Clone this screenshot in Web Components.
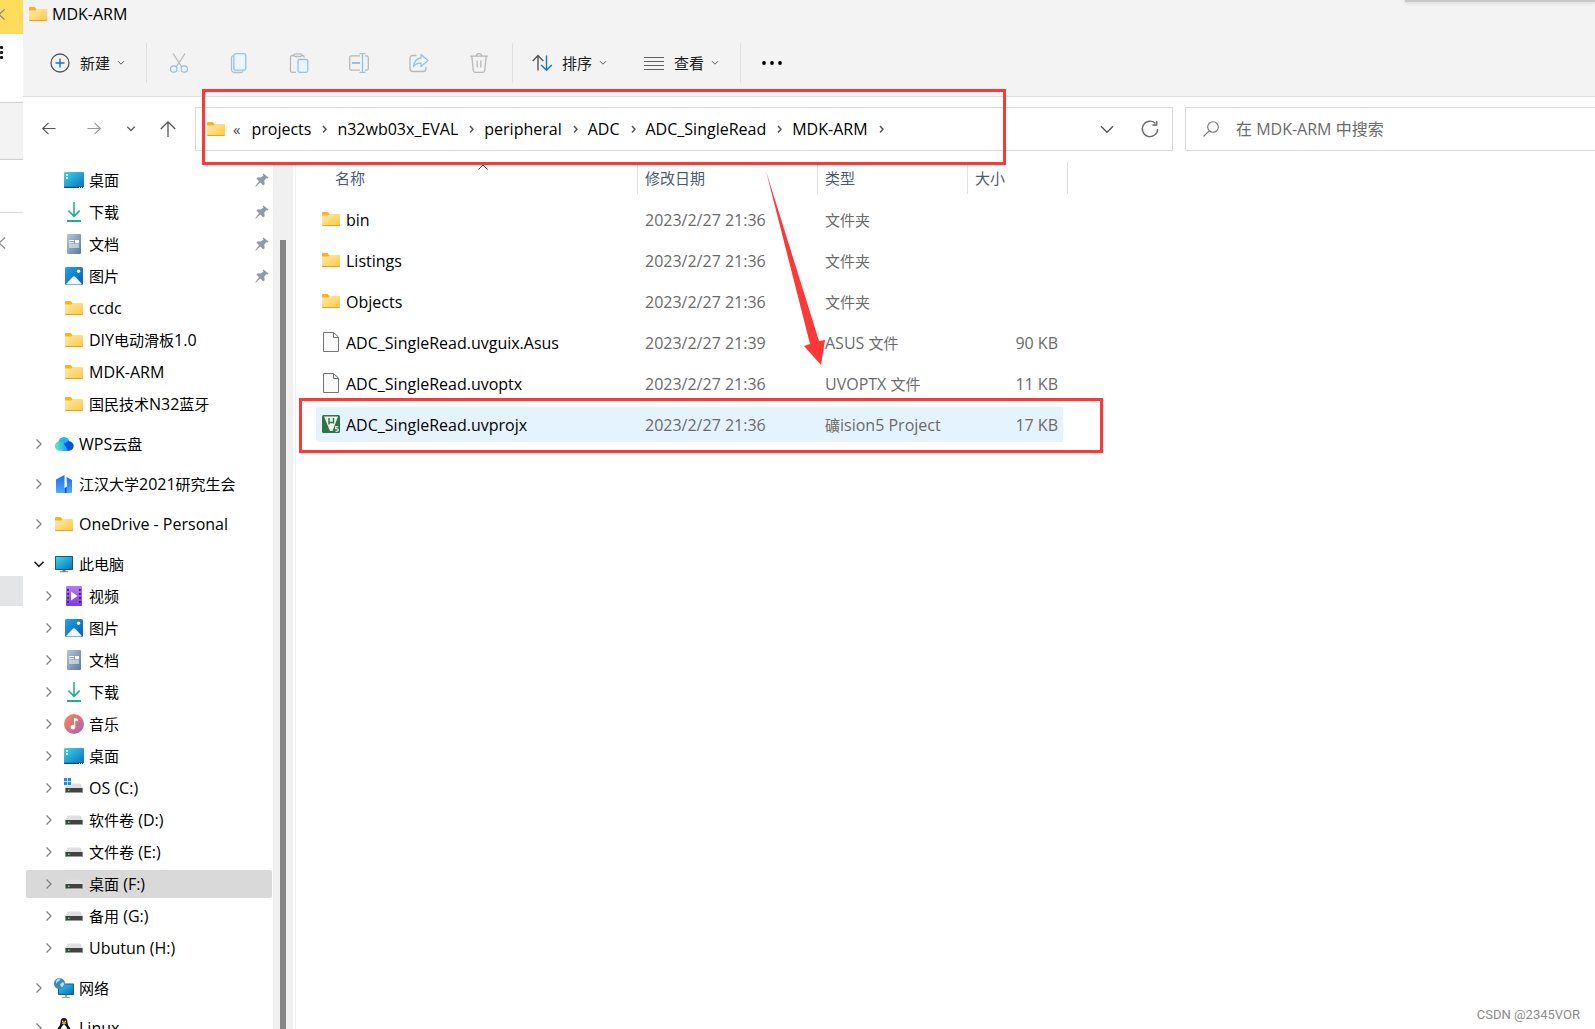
<!DOCTYPE html>
<html lang="zh-CN">
<head>
<meta charset="utf-8">
<title>MDK-ARM</title>
<style>
  html, body { margin: 0; height: 100%; }
  body {
    overflow: hidden; background: #fff; color: #000;
    font-family: "Open Sans", "Noto Sans CJK SC", sans-serif;
    font-size: 15px; line-height: 20px;
  }
</style>
</head>
<body>
<desktop-view></desktop-view>
<script>
const FOLDER = `<svg viewBox="0 0 20 20"><defs><linearGradient id="f" x1="0" y1="0" x2="1" y2="1"><stop offset="0" stop-color="#ffeab0"/><stop offset="1" stop-color="#ffc93f"/></linearGradient></defs><path d="M1 4q0-1 1-1h4.500l2 2H12v4H1z" fill="#f9b517"/><path d="M1 6.500h6.500l1.200-1.500H18q1 0 1 1V16q0 1-1 1H2q-1 0-1-1z" fill="url(#f)"/><path d="M1 16h18q0 1-1 1H2q-1 0-1-1z" fill="#e5a41c"/></svg>`;
const DRIVE = `<path d="M4.500 5.500h11q.8 0 1.300.6L19 10H1l2.200-3.900q.5-.6 1.300-.6z" fill="#dedfe1"/><path d="M1 10h18v5H1z" fill="#9b9b9b"/><path d="M1.800 10h16.400v4H1.800z" fill="#424242"/><path d="M4 11.500h1.500V13H4z" fill="#3cf04a"/>`;
const ICONS = {
  folder: FOLDER,
  desktop: `<svg viewBox="0 0 20 20"><defs><linearGradient id="g" x1="0" y1="0" x2="1" y2="1"><stop offset="0" stop-color="#36dbe8"/><stop offset="1" stop-color="#0d6cbc"/></linearGradient></defs><rect y="2" width="20" height="16" rx="1" fill="url(#g)"/><path d="M0 16.800h20V17q0 1-1 1H1q-1 0-1-1z" fill="#0d4379"/><path d="M2 4h2v2H2zM2 7h2v2H2zM15 17h1v1h-1zM17 17h1v1h-1zM19 17h1v1h-1z" fill="#fff"/></svg>`,
  download: `<svg viewBox="0 0 20 20"><defs><linearGradient id="g" x1="0" y1="0" x2="1" y2="1"><stop offset="0" stop-color="#32c878"/><stop offset="1" stop-color="#12a39b"/></linearGradient></defs><path d="M9.200 0h1.600v12.300l4.300-4.200 1.100 1.200-6.200 6.200-6.200-6.200 1.100-1.200 4.300 4.200z" fill="url(#g)"/><rect x="3" y="18" width="14" height="2" rx=".6" fill="#1db08c"/></svg>`,
  document: `<svg viewBox="0 0 20 20"><defs><linearGradient id="g" x1="0" y1="0" x2="1" y2="1"><stop offset="0" stop-color="#b7c6d7"/><stop offset="1" stop-color="#587ba0"/></linearGradient></defs><rect x="3" width="14" height="20" rx="1" fill="url(#g)"/><path d="M5 6h5v1H5zM5 8.300h5v1H5zM5 10.500h10v1H5zM5 12.600h10v1H5zM11 6h4v3.300h-4z" fill="#fff"/></svg>`,
  picture: `<svg viewBox="0 0 20 20"><defs><linearGradient id="g" x1="0" y1="0" x2="1" y2="1"><stop offset="0" stop-color="#1ea4ea"/><stop offset="1" stop-color="#0a5bb2"/></linearGradient></defs><rect x="1" y="1" width="18" height="18" rx="1.600" fill="url(#g)"/><path d="M2 18l6.800-7.200q1.200-1 2.400 0L18 18q-.4.400-1 .4H3q-.6 0-1-.4z" fill="#f2f8ff"/><circle cx="14.500" cy="5.300" r="1.700" fill="#fff"/></svg>`,
  cloud: `<svg viewBox="0 0 20 20"><defs><linearGradient id="g" x1="0" y1="0" x2="1" y2="0"><stop offset="0" stop-color="#62edc0"/><stop offset="1" stop-color="#18a0f5"/></linearGradient></defs><circle cx="10" cy="8.500" r="5.500" fill="#24b2fb"/><circle cx="15" cy="12" r="4.700" fill="#0756d8"/><path d="M10 8l5 8.700H9z" fill="#086be2"/><path d="M5.500 7.500q2.500 0 3.800 2l4 5.500q-1 1.700-3 1.700H5.300a4.600 4.600 0 0 1 .2-9.200z" fill="url(#g)"/></svg>`,
  building: `<svg viewBox="0 0 20 20"><defs><linearGradient id="g" x1="0" y1="0" x2="0" y2="1"><stop offset="0" stop-color="#176df2"/><stop offset="1" stop-color="#52abff"/></linearGradient></defs><path d="M2 5.500L10.500 1v18H3q-1 0-1-1z" fill="url(#g)"/><path d="M12.500 3l5.500 3v12q0 1-1 1h-5V13l1-.5z" fill="url(#g)"/><path d="M10.500 14l2-1v6h-2z" fill="#0c54cf"/></svg>`,
  computer: `<svg viewBox="0 0 20 20"><defs><linearGradient id="g" x1="0" y1="0" x2="1" y2="1"><stop offset="0" stop-color="#38dbe6"/><stop offset="1" stop-color="#0d6fc0"/></linearGradient></defs><rect x="1" y="2" width="18" height="14" rx=".7" fill="#135a85"/><rect x="2" y="3" width="16" height="12" fill="url(#g)"/><path d="M8.500 16h3v1.300H14v1H6v-1h2.500z" fill="#6b7c86"/></svg>`,
  video: `<svg viewBox="0 0 20 20"><defs><linearGradient id="g" x1="0" y1="0" x2="0" y2="1"><stop offset="0" stop-color="#b57bf3"/><stop offset="1" stop-color="#8338e0"/></linearGradient></defs><rect x="2" width="16" height="20" rx="1" fill="url(#g)"/><path d="M3.200 3h1.800v1.800H3.200zM3.200 7h1.800v1.800H3.200zM3.200 11h1.800v1.800H3.200zM3.200 15h1.800v1.800H3.200zM15 3h1.800v1.800H15zM15 7h1.800v1.800H15zM15 11h1.800v1.800H15zM15 15h1.800v1.800H15z" fill="#3a1a5e"/><path d="M7 5.500l6.500 4.500L7 14.500z" fill="#fff"/></svg>`,
  music: `<svg viewBox="0 0 20 20"><defs><linearGradient id="g" x1="0" y1="0" x2="1" y2="1"><stop offset=".1" stop-color="#f08a58"/><stop offset="1" stop-color="#a95cba"/></linearGradient></defs><circle cx="10" cy="10" r="10" fill="url(#g)"/><path d="M10 4q2.800.2 4 1.500v2Q12.500 6.600 11.300 6.600V13a2.300 2.300 0 1 1-1.300-2z" fill="#fff"/></svg>`,
  drive: `<svg viewBox="0 0 20 20">${DRIVE}</svg>`,
  osdrive: `<svg viewBox="0 0 20 20">${DRIVE}<path d="M-.5-.5h8v8h-8z" fill="#fff"/><path d="M0 0h3.200v3.200H0zM3.900 0H7v3.200H3.900zM0 3.900h3.200V7H0zM3.900 3.900H7V7H3.900z" fill="#1690e6"/></svg>`,
  network: `<svg viewBox="0 0 20 20"><defs><linearGradient id="g" x1="0" y1="0" x2="1" y2="1"><stop offset="0" stop-color="#2fc9e2"/><stop offset="1" stop-color="#0b6fc0"/></linearGradient></defs><rect x="4" y="5.500" width="16" height="11.500" rx=".8" fill="#155f8b"/><rect x="5" y="6.500" width="14" height="9.500" fill="url(#g)"/><path d="M11 17h2v2h3v1H8v-1h3z" fill="#9aa4aa"/><circle cx="5.500" cy="5.500" r="5.500" fill="#3d87b6"/><path d="M2 2.500Q5-.5 6.500 1q-1 2.500-3.500 3.200L2 6zM6 6l3-2 1.500 2-2.500 3.500Q6 8 6 6z" fill="#b4def2"/></svg>`,
  linux: `<svg viewBox="0 0 20 20"><path d="M10 0q3.400 0 3.400 4 0 2.600 2 5Q18 13 16.500 17q-1 2.500-3 2.500h-7q-2 0-3-2.500Q2 13 4.600 9q2-2.400 2-5Q6.600 0 10 0z" fill="#151515"/><path d="M10 6.500q2.800 1.500 3.800 6 .8 4-.8 6.500H7q-1.600-2.500-.8-6.500 1-4.500 3.800-6z" fill="#fff"/><path d="M7.500 5l2.500-1.200L12.500 5 10 7z" fill="#f0aa1c"/><circle cx="8.700" cy="3.200" r=".8" fill="#fff"/><circle cx="11.300" cy="3.200" r=".8" fill="#fff"/></svg>`,
  file: `<svg viewBox="0 0 20 20"><path d="M2.500.5h10L17.500 5v14.500h-15z" fill="#fafafa" stroke="#757575"/><path d="M12.500.5V5.500h5" fill="none" stroke="#757575"/></svg>`,
  uvision: `<svg viewBox="0 0 20 20"><rect x="1" y="1" width="18" height="18" rx="1.500" fill="#2f7348"/><path d="M3 2.500h14L11.500 17h-2.500z" fill="#eef6f0"/><path d="M8 4v6.500M8 8.500h4.300M12.500 4v5.500" fill="none" stroke="#2f7348" stroke-width="1.400"/><path d="M17.300 12.800h-2.600v1.900h1.200q1.400 0 1.400 1.200T15.900 17.200h-1.400" fill="none" stroke="#fff" stroke-width="1.100"/></svg>`,
  pin: `<svg viewBox="0 0 14 14"><path d="M8.500.5l5 4-1.200 1-1-.2-2 2.400.4 3.300L8.500 12.500 5.300 9.500.8 13.500.3 13l3.700-4.700L1.500 5.500l1.300-1.200 3 .3L8.500 2.600 7.700 1.300z" fill="#8f9ba2"/></svg>`,
  add: `<svg viewBox="0 0 20 20" fill="none"><circle cx="10" cy="10" r="9" stroke="#555" stroke-width="1.300"/><path d="M10 5.500v9M5.500 10h9" stroke="#0a78d4" stroke-width="1.400"/></svg>`,
  cut: `<svg viewBox="0 0 20 20" fill="none" stroke-width="1.200"><path d="M4 .5l8.800 13.500M16 .5L7.200 14" stroke="#b5b5b5"/><circle cx="4.700" cy="16" r="3.200" stroke="#8fc1e8"/><circle cx="15.300" cy="16" r="3.200" stroke="#8fc1e8"/></svg>`,
  copy: `<svg viewBox="0 0 20 20" fill="none" stroke-width="1.300"><path d="M4 2.500Q2.500 3 2.500 5v11q0 3.500 3.500 3.500h5.500q2 0 2.500-1.300" stroke="#bcbcbc"/><rect x="4.800" y=".7" width="12" height="16.500" rx="2.200" stroke="#8fc4ef" fill="#edf5fb"/></svg>`,
  paste: `<svg viewBox="0 0 20 20" fill="none" stroke-width="1.300"><path d="M7 19.300H3.200Q1.500 19.300 1.500 17.500V4.500Q1.500 2.500 3.500 2.500H5M12 2.500h1.500q1.700 0 1.700 2" stroke="#b8b8b8"/><rect x="5" y=".8" width="7.500" height="2.700" rx="1.300" stroke="#b8b8b8"/><rect x="9" y="6.500" width="9.800" height="12.800" rx="1.800" stroke="#8fc4ef" fill="#edf5fb"/></svg>`,
  rename: `<svg viewBox="0 0 20 20" fill="none" stroke-width="1.300"><path d="M11 2.800H2.500Q.7 2.800.7 4.500v11q0 1.700 1.800 1.700H11M16 2.800h1.500q1.800 0 1.800 1.700v11q0 1.700-1.800 1.700H16" stroke="#b8b8b8"/><path d="M3 10h8" stroke="#8fc4ef" stroke-width="2"/><path d="M13.500.8v18.400M10.500.7h6M10.500 19.300h6" stroke="#8fc4ef"/></svg>`,
  share: `<svg viewBox="0 0 20 20" fill="none" stroke-width="1.300"><path d="M7.500 2.500H4Q1 2.500 1 5.500v10q0 3 3 3h10q3 0 3-3V14" stroke="#b8b8b8"/><path d="M12 1.500l7 6-7 6V10.200q-5-.2-7.500 3.500Q5.500 5.500 12 5z" stroke="#8fc4ef" stroke-linejoin="round"/></svg>`,
  trash: `<svg viewBox="0 0 20 20" fill="none" stroke="#b8b8b8" stroke-width="1.300"><path d="M1 3.200h18M7.300 3Q7.300.7 10 .7T12.700 3M2.800 3.500l1.500 14q.2 1.800 2 1.800h7.400q1.800 0 2-1.800l1.500-14M8.200 7.500v7M11.800 7.500v7"/></svg>`,
  sort: `<svg viewBox="0 0 20 20" fill="none" stroke-width="1.400"><path d="M6 17.500V3M.7 8L6 2.600 11.300 8" stroke="#555"/><path d="M14.500 2.500V17M9.200 12l5.300 5.300L19.800 12" stroke="#0a78d4"/></svg>`,
  view: `<svg viewBox="0 0 20 20"><path d="M0 4.500h20M0 8.500h20M0 12.500h20M0 16.500h20" stroke="#606060" stroke-width="1.200"/></svg>`,
  more: `<svg viewBox="0 0 20 20"><circle cx="2" cy="10" r="1.900"/><circle cx="10" cy="10" r="1.900"/><circle cx="18" cy="10" r="1.900"/></svg>`,
  down: `<svg viewBox="0 0 8 8"><path d="M1 2.200l3 3 3-3" fill="none" stroke="#5c5c5c"/></svg>`,
  bigdown: `<svg viewBox="0 0 14 14"><path d="M1 4.200l6 6 6-6" fill="none" stroke="#555" stroke-width="1.400"/></svg>`,
  expand: `<svg viewBox="0 0 12 12"><path d="M3.500 1.500L8 6l-4.500 4.500" fill="none" stroke="#808080" stroke-width="1.300"/></svg>`,
  expanded: `<svg viewBox="0 0 12 12"><path d="M1.500 3.800L6 8.300l4.500-4.500" fill="none" stroke="#222" stroke-width="1.600"/></svg>`,
  crumb: `<svg viewBox="0 0 9 9"><path d="M3 2L6 5.300 3 8.600" fill="none" stroke="#555" stroke-width="1.500"/></svg>`,
  caret: `<svg viewBox="0 0 10 6"><path d="M.5 5.500L5 1l4.500 4.500" fill="none" stroke="#555"/></svg>`,
  back: `<svg viewBox="0 0 16 16"><path d="M15.500 8H2M8 2L1.700 8 8 14" fill="none" stroke="#555" stroke-width="1.200"/></svg>`,
  forward: `<svg viewBox="0 0 16 16"><path d="M.5 8H14M8 2l6.300 6L8 14" fill="none" stroke="#999" stroke-width="1.200"/></svg>`,
  up: `<svg viewBox="0 0 16 16"><path d="M8 16V1M.8 8L8 .8 15.200 8" fill="none" stroke="#555" stroke-width="1.300"/></svg>`,
  refresh: `<svg viewBox="0 0 18 18"><path d="M14.500 3.500A7.700 7.700 0 1 0 16.700 9M15.800 1v4H11.500" fill="none" stroke="#666" stroke-width="1.300"/></svg>`,
  search: `<svg viewBox="0 0 16 16" fill="none" stroke="#777" stroke-width="1.100"><circle cx="10" cy="6" r="5.300"/><path d="M6.200 9.800L.5 15.500"/></svg>`,
  less: `<svg viewBox="0 0 14 14"><path d="M5 1.500L-1 7l6 5.500" fill="none" stroke="#8a8a8a" stroke-width="1.400"/></svg>`,
};

function define(name, render) {
  customElements.define(name, class extends HTMLElement {
    constructor() { super(); this.attachShadow({ mode: "open" }); }
    connectedCallback() { this.shadowRoot.innerHTML = render(this); }
  });
}

const ic = (name, size = 20, extra = "") => `<ui-icon name="${name}" size="${size}" ${extra}></ui-icon>`;

// Latin runs are set one size larger than the Chinese text beside them.
const mix = text => text.replace(/[\x20-\x7e]+/g, run => `<span style="font-size:var(--latin)">${run}</span>`);

define("ui-icon", el => `<style>
  :host { display: block; flex: none; width: ${el.getAttribute("size")}px; height: ${el.getAttribute("size")}px; }
  svg { display: block; width: 100%; height: 100%; overflow: visible; }
</style>${ICONS[el.getAttribute("name")]}`);

define("back-window", () => `<style>
  :host { display: flex; flex-direction: column; background: #fff; overflow: hidden; }
  .tab { height: 34px; background: #ffdc5c; display: flex; align-items: center; padding-bottom: 6px; box-sizing: border-box; }
  .menu { height: 68px; display: flex; flex-direction: column; gap: 2px; padding-top: 12px; box-sizing: border-box; }
  .menu i { width: 3px; height: 3px; border-radius: 1px; background: #111; }
  .bar { height: 56px; background: #f3f3f3; border: solid #d0d0d0; border-width: 1px 0; }
  .row { height: 52px; border-bottom: 1px solid #ddd; }
  .col { height: 363px; padding-top: 23px; box-sizing: border-box; }
  .thumb { height: 30px; background: #e4e5e7; }
</style>
<div class="tab">${ic("less", 13)}</div>
<div class="menu"><i></i><i></i><i></i></div>
<div class="bar"></div><div class="row"></div>
<div class="col">${ic("less", 14)}</div>
<div class="thumb"></div>`);

define("title-bar", () => `<style>
  :host { display: flex; align-items: center; gap: 4px; height: 28px; padding-left: 5px; font-size: var(--latin); }
</style>${ic("folder")}<slot></slot>`);

define("tool-button", el => `<style>
  :host { display: block; }
  button { display: flex; align-items: center; border: 0; padding: 0; background: none; color: inherit; font: inherit; height: 40px; }
  span { white-space: nowrap; padding: 0 7px 0 10px; }
</style>
<button aria-label="${el.getAttribute("label")}">${ic(el.getAttribute("icon"))}${el.hasAttribute("menu") ? `<span><slot></slot></span>${ic("down", 8)}` : ""}</button>`);

define("command-bar", () => `<style>
  :host { display: flex; align-items: center; box-sizing: border-box; height: 69px; padding: 2px 0 0 27px; border-bottom: 1px solid #dedede; color: #1b1b1b; }
  .sep { width: 1px; height: 40px; background: #e0e0e0; }
  .group { display: flex; gap: 40px; padding: 0 23px 0 22px; }
  .first { padding: 0 21px 0 0; }
  .wide { gap: 37px; padding: 0 21px 0 19px; }
  .last { padding: 0 21px; }
</style>
<div class="group first"><tool-button icon="add" label="新建" menu>新建</tool-button></div><span class="sep"></span>
<div class="group"><tool-button icon="cut" label="剪切"></tool-button><tool-button icon="copy" label="复制"></tool-button><tool-button icon="paste" label="粘贴"></tool-button><tool-button icon="rename" label="重命名"></tool-button><tool-button icon="share" label="共享"></tool-button><tool-button icon="trash" label="删除"></tool-button></div><span class="sep"></span>
<div class="group wide"><tool-button icon="sort" label="排序" menu>排序</tool-button><tool-button icon="view" label="查看" menu>查看</tool-button></div><span class="sep"></span>
<div class="group last"><tool-button icon="more" label="更多"></tool-button></div>`);

define("address-bar", () => `<style>
  :host { display: flex; align-items: center; height: 65px; padding-bottom: 2px; box-sizing: border-box; }
  button { border: 0; background: none; padding: 0; display: grid; place-items: center; }
  .nav { display: flex; align-items: center; gap: 24px; width: 154px; padding-left: 18px; }
  .nav button:first-child { padding-right: 7px; }
  .path, .search { display: flex; align-items: center; box-sizing: border-box; height: 44px; border: 1px solid #d9d9d9; }
  .path { flex: 1; padding: 0 13px 0 10px; min-width: 0; }
  .crumbs { display: flex; align-items: center; gap: 11px; flex: 1; white-space: nowrap; }
  .crumbs ui-icon { margin-right: -4px; }
  .crumbs ui-icon.sep { margin: 0 -3px 0 -2px; }
  .crumbs span { color: #444; }
  a { color: #000; text-decoration: none; font-size: var(--latin); }
  .acts { display: flex; gap: 27px; align-items: center; }
  .search { width: 423px; margin: 0 -13px 0 12px; padding: 0 17px; gap: 17px; font-size: var(--latin); }
  input { flex: 1; border: 0; outline: 0; padding: 0; background: none; font: inherit; min-width: 0; }
  input::placeholder { color: #6b6b6b; opacity: 1; }
</style>
<div class="nav"><button aria-label="后退">${ic("back", 15)}</button><button aria-label="前进">${ic("forward", 15)}</button><button aria-label="最近">${ic("down", 10)}</button><button aria-label="上一级">${ic("up", 16)}</button></div>
<div class="path"><div class="crumbs">${ic("folder")}<span>«</span>${
  ["projects", "n32wb03x_EVAL", "peripheral", "ADC", "ADC_SingleRead", "MDK-ARM"]
    .map(t => `<a href="#">${t}</a>${ic("crumb", 9, 'class="sep"')}`).join("")
}</div><div class="acts"><button aria-label="历史">${ic("bigdown", 14)}</button><button aria-label="刷新">${ic("refresh", 18)}</button></div></div>
<label class="search">${ic("search", 16)}<input type="search" placeholder="在 MDK-ARM 中搜索"></label>`);

define("tree-item", el => {
  const state = el.getAttribute("state");
  return `<style>
  :host { display: flex; align-items: center; height: 28px; margin-bottom: 4px; padding: 0 3px 0 7px; border-radius: 2px; }
  :host([root]) { margin: 8px 0 4px; }
  :host([selected]) { background: #d9d9d9; }
  .arrow { width: 12px; margin: 0 9px 0 ${el.hasAttribute("root") ? 0 : 10}px; }
  .name { flex: 1; margin-left: 5px; white-space: nowrap; }
</style>
<span class="arrow">${state ? ic(state, 12) : ""}</span>${ic(el.getAttribute("icon"))}<span class="name"><slot></slot></span>${el.hasAttribute("pinned") ? ic("pin", 14) : ""}`;
});

const TREE = [
  ["desktop", "桌面", "pinned"], ["download", "下载", "pinned"], ["document", "文档", "pinned"], ["picture", "图片", "pinned"],
  ["folder", "ccdc"], ["folder", "DIY电动滑板1.0"], ["folder", "MDK-ARM"], ["folder", "国民技术N32蓝牙"],
  ["cloud", "WPS云盘", 'root state="expand"'], ["building", "江汉大学2021研究生会", 'root state="expand"'],
  ["folder", "OneDrive - Personal", 'root state="expand"'], ["computer", "此电脑", 'root state="expanded"'],
  ["video", "视频", 'state="expand"'], ["picture", "图片", 'state="expand"'], ["document", "文档", 'state="expand"'],
  ["download", "下载", 'state="expand"'], ["music", "音乐", 'state="expand"'], ["desktop", "桌面", 'state="expand"'],
  ["osdrive", "OS (C:)", 'state="expand"'], ["drive", "软件卷 (D:)", 'state="expand"'], ["drive", "文件卷 (E:)", 'state="expand"'],
  ["drive", "桌面 (F:)", 'selected state="expand"'], ["drive", "备用 (G:)", 'state="expand"'], ["drive", "Ubutun (H:)", 'state="expand"'],
  ["network", "网络", 'root state="expand"'], ["linux", "Linux", 'root state="expand"'],
];

define("nav-tree", () => `<style>
  :host { display: flex; overflow: hidden; border-right: 1px solid #f2f2f2; padding-right: 2px; }
  .items { flex: 1; display: flex; flex-direction: column; padding: 4px 1px 0 3px; }
  tree-item { flex: none; }
  .track { width: 20px; box-sizing: border-box; background: #f0f0f0; padding: 78px 7px 0; }
  .thumb { height: 100%; background: #858585; }
</style>
<div class="items">${TREE.map(([i, t, a = ""]) => `<tree-item icon="${i}" ${a}>${mix(t)}</tree-item>`).join("")}</div>
<div class="track"><div class="thumb"></div></div>`);

const FILES = [
  ["folder", "bin", "2023/2/27 21:36", "文件夹", ""],
  ["folder", "Listings", "2023/2/27 21:36", "文件夹", ""],
  ["folder", "Objects", "2023/2/27 21:36", "文件夹", ""],
  ["file", "ADC_SingleRead.uvguix.Asus", "2023/2/27 21:39", "ASUS 文件", "90 KB"],
  ["file", "ADC_SingleRead.uvoptx", "2023/2/27 21:36", "UVOPTX 文件", "11 KB"],
  ["uvision", "ADC_SingleRead.uvprojx", "2023/2/27 21:36", "礦ision5 Project", "17 KB"],
];

define("file-table", () => `<style>
  :host { display: block; padding-left: 20px; margin-top: -6px; }
  table { table-layout: fixed; width: 752px; border-spacing: 0 6px; color: #6b6b6b; }
  th { padding: 0; height: 34px; font-weight: 400; text-align: left; vertical-align: top; color: #4a5b78; }
  th div { display: grid; align-items: center; box-sizing: border-box; height: 32px; padding-left: 7px; border-right: 1px solid #e3e3e3; }
  th:first-child div { padding: 0 6px 0 19px; }
  th div > * { grid-area: 1 / 1; }
  th ui-icon { align-self: start; justify-self: center; }
  td { padding: 0 0 0 7px; height: 35px; white-space: nowrap; }
  td:first-child { padding-left: 5px; border-radius: 2px 0 0 2px; }
  td:last-child { text-align: right; padding: 0 5px 0 0; border-right: 5px solid transparent; background-clip: padding-box; }
  .name { display: flex; align-items: center; gap: 5px; color: #000; }
  .name ui-icon { margin-bottom: 2px; }
  tr.sel td { background-color: #e5f3ff; }
</style>
<table>
<colgroup><col style="width:322px"><col style="width:180px"><col style="width:150px"><col></colgroup>
<thead><tr><th><div><span>名称</span>${ic("caret", 10)}</div></th><th><div>修改日期</div></th><th><div>类型</div></th><th><div>大小</div></th></tr></thead>
<tbody>${FILES.map(([i, n, d, t, s], k) => `<tr class="${k === 5 ? "sel" : ""}"><td><div class="name">${ic(i)}${mix(n)}</div></td><td>${mix(d)}</td><td>${mix(t)}</td><td>${mix(s)}</td></tr>`).join("")}</tbody>
</table>`);

define("explorer-window", () => `<style>
  :host { display: flex; flex-direction: column; background: #fff; min-width: 0; overflow: hidden; }
  header { background: #f3f3f3; }
  .body { flex: 1; display: grid; grid-template-columns: 273px 1fr; min-height: 0; }
</style>
<header><title-bar>MDK-ARM</title-bar><command-bar></command-bar></header>
<address-bar></address-bar>
<div class="body"><nav-tree></nav-tree><main><file-table></file-table></main></div>`);

define("markup-layer", () => `<style>
  :host { position: absolute; inset: 0; pointer-events: none; overflow: hidden; }
  svg { position: absolute; left: 0; top: 0; width: 100%; height: 100%; }
  .edge { position: absolute; left: 1405px; right: 0; top: 0; height: 2px; background: #c9c9c9; box-shadow: 0 0 4px #bbb; }
  .mark { position: absolute; right: 15px; bottom: 4px; font: 13px/20px Roboto, sans-serif; color: #8c8c8c; }
</style>
<div class="edge"></div>
<svg fill="none" stroke="#fd3838" stroke-width="3"><rect x="203.500" y="90.500" width="801" height="73"/><rect x="300.500" y="399.500" width="801" height="52"/><path d="M766 171L819 341l6-1-4 25-17-19 6-2z" fill="#fd3838" stroke="none"/></svg>
<span class="mark">CSDN @2345VOR</span>`);

define("desktop-view", () => `<style>
  :host { --latin: 16px; position: relative; display: grid; grid-template-columns: 23px 1fr; height: 100vh; overflow: hidden; }
</style>
<back-window></back-window><explorer-window></explorer-window><markup-layer></markup-layer>`);
</script>
</body>
</html>
